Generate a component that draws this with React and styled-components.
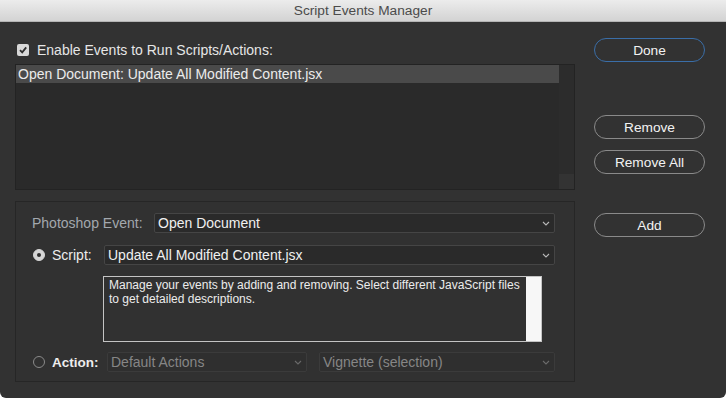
import React from "react";
import styled, { createGlobalStyle } from "styled-components";

const GlobalStyle = createGlobalStyle`
  html, body {
    margin: 0;
    padding: 0;
    background: #ffffff;
  }
  body {
    font-family: "Liberation Sans", Arial, Helvetica, sans-serif;
    font-size: 14px;
    -webkit-font-smoothing: antialiased;
  }
`;

const Window = styled.div`
  width: 726px;
  height: 398px;
  display: flex;
  flex-direction: column;
  background: #323232;
  border-radius: 0 0 6px 6px;
  overflow: hidden;
`;

const TitleBar = styled.div`
  height: 22px;
  flex: none;
  display: flex;
  align-items: center;
  justify-content: center;
  background: linear-gradient(to bottom, #ececec, #d3d3d3);
  border-bottom: 1px solid #b4b4b4;
  box-sizing: border-box;
  color: #4b4b4b;
  font-size: 13.7px;
`;

const Body = styled.div`
  flex: 1;
  display: flex;
  padding: 16px 21px 16px 15px;
`;

const LeftColumn = styled.div`
  width: 560px;
  display: flex;
  flex-direction: column;
`;

const RightColumn = styled.div`
  flex: 1;
  display: flex;
  flex-direction: column;
  align-items: flex-end;
`;

const CheckRow = styled.label`
  display: flex;
  align-items: center;
  gap: 8px;
  height: 24px;
  padding-left: 2px;
  color: #e6e6e6;
  font-size: 14px;
`;

const CheckBox = styled.span`
  width: 12px;
  height: 12px;
  border-radius: 2px;
  background: #d8d8d8;
  display: flex;
  align-items: center;
  justify-content: center;
`;

const ListBox = styled.div`
  margin-top: 2px;
  height: 126px;
  display: flex;
  background: #2a2a2a;
  border: 1px solid #232323;
  box-sizing: border-box;
`;

const ListItems = styled.div`
  flex: 1;
`;

const ListRow = styled.div`
  height: 18px;
  line-height: 18px;
  padding-left: 2px;
  background: ${p => (p.selected ? "#4a4a4a" : "transparent")};
  color: #ececec;
  font-size: 14px;
`;

const ScrollTrack = styled.div`
  width: 15px;
  display: flex;
  flex-direction: column;
  justify-content: flex-end;
  background: #2c2c2c;
`;

const ScrollCorner = styled.div`
  height: 15px;
  background: #333333;
`;

const Panel = styled.div`
  margin-top: 11px;
  flex: 1;
  border: 1px solid #262626;
  background: #313131;
  box-sizing: border-box;
  padding: 11px 19px 0 16px;
  display: flex;
  flex-direction: column;
`;

const FieldRow = styled.div`
  display: flex;
  align-items: center;
  height: 20px;
  margin-top: ${p => p.top || 0}px;
`;

const Label = styled.span`
  color: ${p => (p.muted ? "#a3a8ae" : "#ededed")};
  font-weight: ${p => (p.bold ? "bold" : "normal")};
  font-size: ${p => (p.bold ? 13.5 : 14)}px;
  width: ${p => p.width}px;
  flex: none;
  white-space: nowrap;
`;

const Radio = styled.span`
  width: 12px;
  height: 12px;
  border-radius: 50%;
  margin-left: 1px;
  margin-right: 7px;
  flex: none;
  box-sizing: border-box;
  display: flex;
  align-items: center;
  justify-content: center;
  background: ${p => (p.checked ? "#d6d6d6" : "transparent")};
  border: 1px solid ${p => (p.checked ? "#d6d6d6" : "#8a8a8a")};

  &::after {
    content: "";
    display: ${p => (p.checked ? "block" : "none")};
    width: 4px;
    height: 4px;
    border-radius: 50%;
    background: #2e2e2e;
  }
`;

const Select = styled.div`
  flex: ${p => (p.width ? "none" : 1)};
  width: ${p => (p.width ? `${p.width}px` : "auto")};
  height: 20px;
  box-sizing: border-box;
  display: flex;
  align-items: center;
  justify-content: space-between;
  padding: 0 4px 0 3px;
  margin-left: ${p => p.left || 0}px;
  background: ${p => (p.disabled ? "#2f2f2f" : "#2a2a2a")};
  border: 1px solid ${p => (p.disabled ? "#3b3b3b" : "#454545")};
  border-radius: 2px;
  color: ${p => (p.disabled ? "#868686" : "#f0f0f0")};
  font-size: 14px;
  white-space: nowrap;

  svg {
    flex: none;
  }
`;

const Description = styled.div`
  margin: 11px 13px 0 71px;
  height: 66px;
  display: flex;
  border: 1px solid #c4c4c4;
  box-sizing: border-box;
`;

const DescText = styled.div`
  flex: 1;
  padding: 1px 5px;
  color: #ececec;
  font-size: 12px;
  line-height: 14px;
`;

const DescScroll = styled.div`
  width: 15px;
  background: #f7f7f7;
`;

const PillButton = styled.button`
  width: 111px;
  height: 24px;
  margin-top: ${p => p.top || 0}px;
  border-radius: 12px;
  background: transparent;
  border: ${p => (p.primary ? "1.5px solid #3a6ea8" : "1px solid #8a8a8a")};
  color: #f2f2f2;
  font-family: "Liberation Sans", Arial, sans-serif;
  font-size: 13.7px;
  padding: 0;
  cursor: pointer;
  outline: none;
`;

const Chevron = ({ color = "#b8b8b8" }) => (
  <svg width="8" height="5" viewBox="0 0 8 5">
    <path d="M1 1 L4 4 L7 1" fill="none" stroke={color} strokeWidth="1.1" />
  </svg>
);

export default function App() {
  return (
    <>
      <GlobalStyle />
      <Window>
        <TitleBar>Script Events Manager</TitleBar>
        <Body>
          <LeftColumn>
            <CheckRow>
              <CheckBox>
                <svg width="10" height="10" viewBox="0 0 10 10">
                  <path
                    d="M2 5.2 L4.2 7.4 L8.2 2.4"
                    fill="none"
                    stroke="#2e2e2e"
                    strokeWidth="1.8"
                  />
                </svg>
              </CheckBox>
              Enable Events to Run Scripts/Actions:
            </CheckRow>
            <ListBox>
              <ListItems>
                <ListRow selected>
                  Open Document: Update All Modified Content.jsx
                </ListRow>
              </ListItems>
              <ScrollTrack>
                <ScrollCorner />
              </ScrollTrack>
            </ListBox>
            <Panel>
              <FieldRow>
                <Label muted width={122}>
                  Photoshop Event:
                </Label>
                <Select>
                  Open Document
                  <Chevron />
                </Select>
              </FieldRow>
              <FieldRow top={12}>
                <Radio checked />
                <Label width={52}>Script:</Label>
                <Select>
                  Update All Modified Content.jsx
                  <Chevron />
                </Select>
              </FieldRow>
              <Description>
                <DescText>
                  Manage your events by adding and removing. Select different
                  JavaScript files to get detailed descriptions.
                </DescText>
                <DescScroll />
              </Description>
              <FieldRow top={10}>
                <Radio />
                <Label bold width={55}>
                  Action:
                </Label>
                <Select disabled width={200}>
                  Default Actions
                  <Chevron color="#6a6a6a" />
                </Select>
                <Select disabled left={12}>
                  Vignette (selection)
                  <Chevron color="#6a6a6a" />
                </Select>
              </FieldRow>
            </Panel>
          </LeftColumn>
          <RightColumn>
            <PillButton primary>Done</PillButton>
            <PillButton top={53}>Remove</PillButton>
            <PillButton top={11}>Remove All</PillButton>
            <PillButton top={39}>Add</PillButton>
          </RightColumn>
        </Body>
      </Window>
    </>
  );
}
